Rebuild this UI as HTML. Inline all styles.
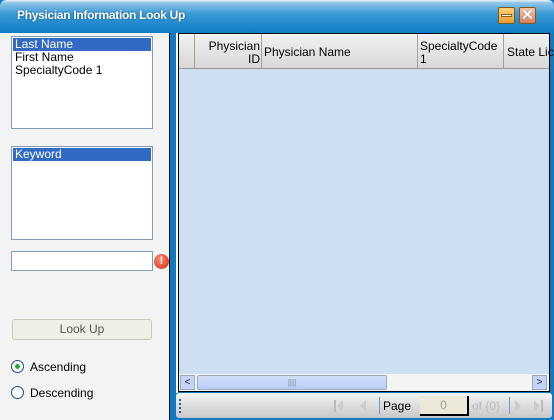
<!DOCTYPE html>
<html><head><style>
*{margin:0;padding:0;box-sizing:border-box}
body{width:554px;height:420px;overflow:hidden;background:#0f7ac0;font-family:"Liberation Sans",sans-serif;font-size:12px;position:relative}
.title{position:absolute;left:0;top:0;width:554px;height:34px;background:linear-gradient(#e8f2fa 0,#8ec4e8 3px,#3a9ad6 14px,#0c79c4 34px);border-radius:6px 6px 0 0}
.title span{position:absolute;left:17px;top:8px;color:#fff;font-weight:bold;font-size:12px;letter-spacing:-0.3px;text-shadow:0 0 2px #0a4c80}
.btn{position:absolute;top:7px;width:17px;height:17px;border:1px solid #7a5a20;border-radius:2px}
.left{position:absolute;left:0;top:33px;width:170px;height:387px;background:#f3f3f3;border-right:1px solid #111}
.lb{position:absolute;left:11px;width:142px;background:#fff;border:1px solid #7f9db9;font-size:12px;line-height:13px;padding:1px}
.lb div{padding-left:2px;color:#000}
.sel{background:#316ac5;color:#fff!important}
.grid{position:absolute;left:178px;top:33px;width:372px;height:359px;background:#cfdff2;border:1px solid #000}
.hdr{position:absolute;left:0;top:0;height:35px;width:370px;background:linear-gradient(#f2f2f2,#d8d8d8);border-bottom:1px solid #999}
.hc{position:absolute;top:0;height:35px;border-right:1px solid #aa9f90;font-size:12px;line-height:13px}
.tb{position:absolute;left:176px;top:393px;width:376px;height:25px;background:linear-gradient(#f4f4f4,#c8c8c8);border-radius:3px}
.tri{position:absolute;width:0;height:0;border-top:6px solid transparent;border-bottom:6px solid transparent}
.bar{position:absolute;width:2px;height:12px;background:#bbb}
</style></head><body>
<div class="title"><span>Physician Information Look Up</span>
<div class="btn" style="left:498px;background:linear-gradient(#ffd27a,#e8a030)"><div style="position:absolute;left:2px;top:6px;width:11px;height:3px;background:#fff;border:1px solid #8a6020"></div></div>
<div class="btn" style="left:519px;background:linear-gradient(#f8c8a8,#d88060);font-size:16px;color:#fff;text-align:center;line-height:15px;font-weight:bold;text-shadow:0 0 1px #600">✕</div>
</div>
<div class="left">
<div class="lb" style="top:3px;height:93px"><div class="sel">Last Name</div><div>First Name</div><div>SpecialtyCode 1</div></div>
<div class="lb" style="top:113px;height:94px"><div class="sel">Keyword</div></div>
<div style="position:absolute;left:11px;top:218px;width:142px;height:20px;background:#fff;border:1px solid #7f9db9"></div>
<div style="position:absolute;left:154px;top:221px;width:15px;height:15px;border-radius:50%;background:radial-gradient(circle at 40% 35%,#ff8a70,#d02a10);color:#fff;font-weight:bold;font-size:11px;text-align:center;line-height:15px">!</div>
<div style="position:absolute;left:12px;top:286px;width:140px;height:21px;background:#f0efe6;border:1px solid #ccc8b8;border-radius:3px;text-align:center;line-height:19px;color:#555">Look Up</div>
<div style="position:absolute;left:11px;top:327px;width:13px;height:13px;border:1px solid #1c5180;border-radius:50%;background:#fff"><div style="position:absolute;left:3px;top:3px;width:5px;height:5px;border-radius:50%;background:#2fa82f"></div></div>
<div style="position:absolute;left:30px;top:327px">Ascending</div>
<div style="position:absolute;left:11px;top:353px;width:13px;height:13px;border:1px solid #1c5180;border-radius:50%;background:#fff"></div>
<div style="position:absolute;left:30px;top:353px">Descending</div>
</div>
<div style="position:absolute;left:176px;top:33px;width:2px;height:360px;background:#fff"></div>
<div class="grid">
<div class="hdr">
<div class="hc" style="left:0;width:16px"></div>
<div class="hc" style="left:16px;width:67px;text-align:right;padding:6px 1px 0 0">Physician<br>ID</div>
<div class="hc" style="left:83px;width:156px;padding:12px 0 0 2px">Physician Name</div>
<div class="hc" style="left:239px;width:86px;padding:6px 0 0 2px">SpecialtyCode<br>1</div>
<div class="hc" style="left:325px;width:60px;border:none;padding:12px 0 0 3px;white-space:nowrap">State Lic</div>
</div>
<div style="position:absolute;left:0;top:340px;width:370px;height:17px;background:#f4f4f4">
<div style="position:absolute;left:1px;top:1px;width:15px;height:15px;background:#c4d4f4;border:1px solid #9ab;font-size:10px;line-height:13px;text-align:center;color:#224">&lt;</div>
<div style="position:absolute;left:18px;top:1px;width:190px;height:15px;background:linear-gradient(#d4e0fa,#b8cdf6);border:1px solid #9ab;border-radius:2px;text-align:center;font-size:8px;line-height:13px;color:#789">||||</div>
<div style="position:absolute;left:353px;top:1px;width:15px;height:15px;background:#c4d4f4;border:1px solid #9ab;font-size:10px;line-height:13px;text-align:center;color:#224">&gt;</div>
</div>
</div>
<div class="tb">
<div style="position:absolute;left:3px;top:6px;width:2px;height:14px;border-left:2px dotted #2a5a9a"></div>
<div class="bar" style="left:158px;top:7px"></div><div class="tri" style="left:161px;top:7px;border-right:6px solid #ccc"></div>
<div class="tri" style="left:184px;top:7px;border-right:6px solid #ccc"></div>
<div style="position:absolute;left:203px;top:4px;width:1px;height:17px;background:#6a9ad8"></div>
<div style="position:absolute;left:207px;top:6px">Page</div>
<div style="position:absolute;left:244px;top:3px;width:49px;height:20px;background:#ece9d8;border-right:2px solid #000;border-bottom:2px solid #000;text-align:center;line-height:18px;color:#999">0</div>
<div style="position:absolute;left:296px;top:6px;color:#bbb">of {0}</div>
<div style="position:absolute;left:333px;top:4px;width:1px;height:17px;background:#6a9ad8"></div>
<div class="tri" style="left:339px;top:7px;border-left:6px solid #ccc"></div>
<div class="tri" style="left:358px;top:7px;border-left:6px solid #ccc"></div><div class="bar" style="left:365px;top:7px"></div>
</div>
</body></html>
